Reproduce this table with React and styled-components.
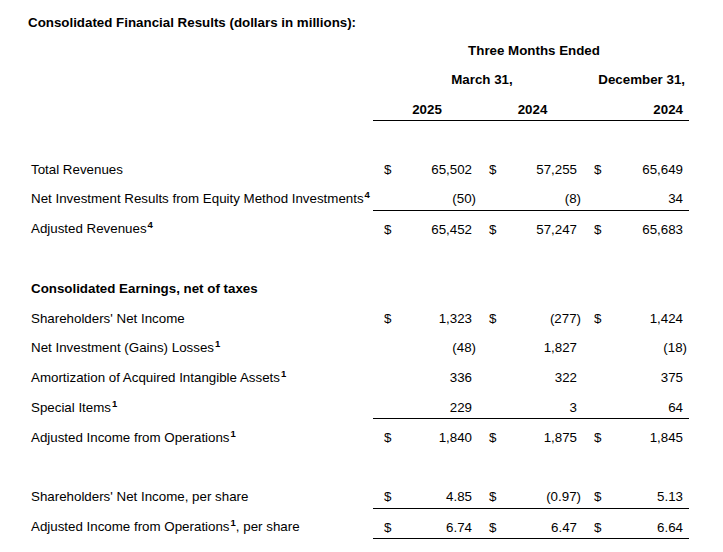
import styled, { createGlobalStyle } from "styled-components";

const GlobalStyle = createGlobalStyle`
  body {
    margin: 0;
    background: #ffffff;
    color: #000000;
    font-family: "Liberation Sans", Arial, sans-serif;
    font-size: 13.33px;
  }
`;

const Page = styled.div`
  padding: 4px 0 0 28px;
`;

const Title = styled.div`
  box-sizing: border-box;
  height: 27.6px;
  padding-top: 10.5px;
  line-height: 16px;
  font-weight: bold;
`;

const Table = styled.table`
  border-collapse: collapse;
  border-spacing: 0;
  table-layout: fixed;
  width: 661px;
`;

const Row = styled.tr`
  height: 29.8px;
`;

const Cell = styled.td`
  box-sizing: border-box;
  padding: ${(p) => (p.$head ? "11px" : "10.8px")} 0 0 0;
  line-height: 16px;
  vertical-align: top;
  white-space: nowrap;
  font-weight: ${(p) => (p.$bold ? "bold" : "normal")};
  border-bottom: ${(p) => (p.$rule ? "1px solid #000" : "none")};
`;

const Label = styled(Cell)`
  padding-left: 3px;
`;

const Dollar = styled(Cell)`
  padding-left: 11px;
`;

const Value = styled(Cell)`
  text-align: right;
  padding-right: 6px;
`;

const HeadCell = styled(Cell)`
  text-align: ${(p) => p.$align || "center"};
  padding-left: ${(p) => p.$pl || 0}px;
  padding-right: ${(p) => p.$pr || 0}px;
`;

const Neg = styled.span`
  margin-right: -4px;
`;

const Sup = styled.sup`
  font-size: 9.5px;
  font-weight: bold;
  line-height: 0;
  vertical-align: 5px;
  margin-left: 1px;
`;

const fmt = (v) =>
  typeof v === "string" && v.startsWith("(") ? <Neg>{v}</Neg> : v;

const rows = [
  { blank: true },
  { label: "Total Revenues", d: true, vals: ["65,502", "57,255", "65,649"] },
  { label: "Net Investment Results from Equity Method Investments", sup: "4", vals: ["(50)", "(8)", "34"], rule: true },
  { label: "Adjusted Revenues", sup: "4", d: true, vals: ["65,452", "57,247", "65,683"] },
  { blank: true },
  { label: "Consolidated Earnings, net of taxes", bold: true },
  { label: "Shareholders' Net Income", d: true, vals: ["1,323", "(277)", "1,424"] },
  { label: "Net Investment (Gains) Losses", sup: "1", vals: ["(48)", "1,827", "(18)"] },
  { label: "Amortization of Acquired Intangible Assets", sup: "1", vals: ["336", "322", "375"] },
  { label: "Special Items", sup: "1", vals: ["229", "3", "64"], rule: true },
  { label: "Adjusted Income from Operations", sup: "1", d: true, vals: ["1,840", "1,875", "1,845"] },
  { blank: true },
  { label: "Shareholders' Net Income, per share", d: true, vals: ["4.85", "(0.97)", "5.13"], rule: true },
  { label: "Adjusted Income from Operations", sup: "1", tail: ", per share", d: true, vals: ["6.74", "6.47", "6.64"], rule: true },
];

const DataRow = ({ r }) => {
  if (r.blank) {
    return (
      <Row>
        <Cell colSpan={7} />
      </Row>
    );
  }
  return (
    <Row>
      <Label $bold={r.bold}>
        {r.label}
        {r.sup && <Sup>{r.sup}</Sup>}
        {r.tail}
      </Label>
      {r.vals
        ? r.vals.map((v, i) => [
            <Dollar key={"d" + i} $rule={r.rule}>{r.d ? "$" : ""}</Dollar>,
            <Value key={"v" + i} $rule={r.rule}>{fmt(v)}</Value>,
          ])
        : <Cell colSpan={6} />}
    </Row>
  );
};

export default function App() {
  return (
    <Page>
      <GlobalStyle />
      <Title>Consolidated Financial Results (dollars in millions):</Title>
      <Table>
        <colgroup>
          <col style={{ width: 345 }} />
          <col style={{ width: 30 }} />
          <col style={{ width: 75 }} />
          <col style={{ width: 31 }} />
          <col style={{ width: 74 }} />
          <col style={{ width: 30 }} />
          <col style={{ width: 76 }} />
        </colgroup>
        <tbody>
          <Row>
            <Cell $head />
            <HeadCell $head $bold colSpan={6} $pl={6}>Three Months Ended</HeadCell>
          </Row>
          <Row>
            <Cell $head />
            <HeadCell $head $bold colSpan={4} $pl={8}>March 31,</HeadCell>
            <HeadCell $head $bold colSpan={2} $align="right" $pr={4}>December 31,</HeadCell>
          </Row>
          <Row>
            <Cell $head />
            <HeadCell $head $bold $rule colSpan={2} $pl={3}>2025</HeadCell>
            <HeadCell $head $bold $rule colSpan={2} $pl={4}>2024</HeadCell>
            <HeadCell $head $bold $rule colSpan={2} $align="right" $pr={6}>2024</HeadCell>
          </Row>
          {rows.map((r, i) => (
            <DataRow key={i} r={r} />
          ))}
        </tbody>
      </Table>
    </Page>
  );
}
